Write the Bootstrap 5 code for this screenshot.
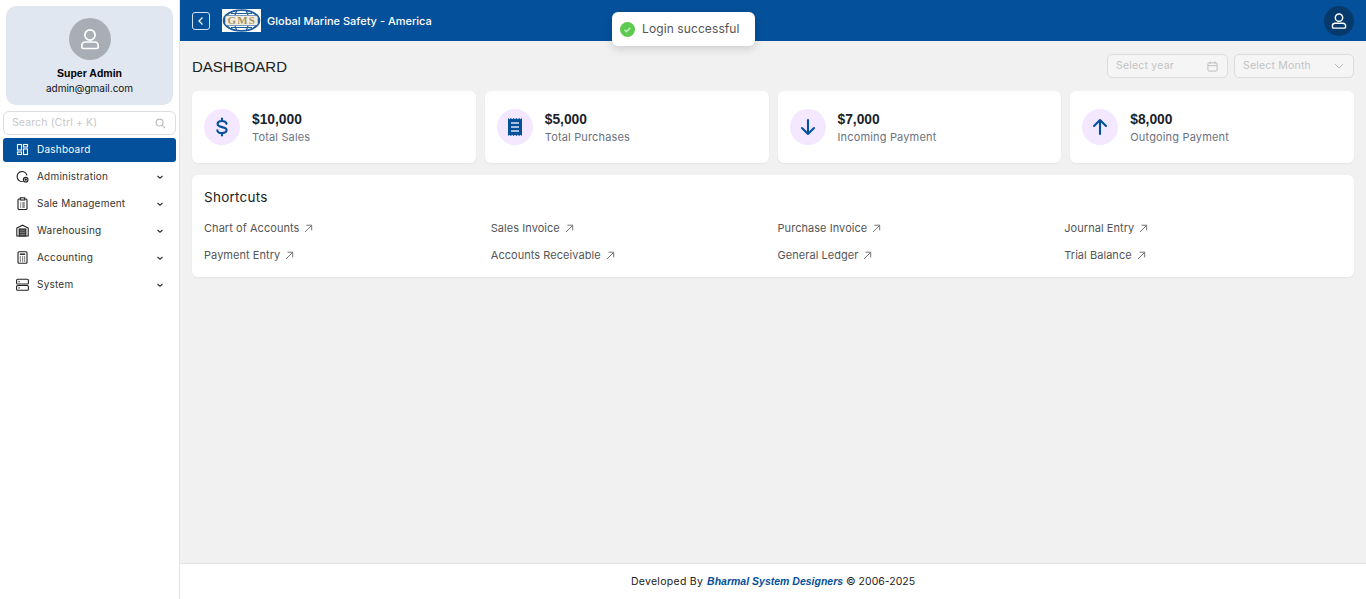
<!DOCTYPE html>
<html lang="en">
<head>
  <meta charset="UTF-8" />
  <meta name="viewport" content="width=device-width, initial-scale=1" />
  <title>Dashboard - Global Marine Safety</title>
  <link href="https://cdn.jsdelivr.net/npm/bootstrap@5.3.0/dist/css/bootstrap.min.css" rel="stylesheet" />
  <style>
    body {
      font-family: Inter, "Noto Sans", sans-serif;
      background: #f1f1f1;
      color: #222;
      height: 599px;
      overflow: hidden;
    }
    .app-shell { height: 599px; position: relative; }
    .side-panel { width: 180px; background: #fff; border-right: 1px solid #e4e4e4; padding: 6px 3px 0; flex-shrink: 0; }
    .profile-box { background: #e1e7f0; border-radius: 10px; margin: 0 3px 6px; height: 99px; padding-top: 12px; text-align: center; }
    .avatar-round { width: 42px; height: 42px; border-radius: 50%; background: #a9aeb6; color: #fff; }
    .profile-name { font-family: "Liberation Sans", sans-serif; font-weight: 700; font-size: 10.5px; color: #000; margin-top: 7px; line-height: 13px; }
    .profile-mail { font-size: 10px; color: #111; line-height: 14px; margin-top: 1px; }
    .side-search { height: 24px; border: 1px solid #ddd; border-radius: 6px; padding: 0 9px 0 8px; font-size: 10.5px; letter-spacing: .12px; color: #c8c8c8; margin-bottom: 3px; }
    .menu-row { height: 24px; margin-bottom: 3px; padding: 0 12px 1px 13px; font-size: 10px; letter-spacing: .22px; color: #333; border-radius: 3px; gap: 8px; text-decoration: none; }
    .menu-row.is-active { background: #05509a; color: #fff; }
    .menu-row svg.mi { flex-shrink: 0; }
    .top-strip { height: 41px; background: #05509a; color: #fff; padding: 0 12px; flex-shrink: 0; }
    .back-btn { width: 18px; height: 18px; border: 1px solid #d5e1ee; border-radius: 3px; margin-right: 12px; }
    .logo-chip { width: 39px; height: 23px; background: #fff; margin-right: 6px; }
    .firm-name { font-size: 11px; font-weight: 500; padding-top: 1px; }
    .user-round { width: 30px; height: 30px; border-radius: 50%; background: #073a6c; }
    .page-body { padding: 13px 12px 0; }
    .page-title { font-family: "Liberation Sans", sans-serif; font-size: 15px; font-weight: 400; color: #222; margin: 0; height: 24px; padding-top: 1px; line-height: 24px; }
    .filter-wrap { gap: 6px; }
    .filter-box { height: 24px; border: 1px solid #dcdcdc; border-radius: 5px; background: #f5f5f5; padding: 0 9px 0 8px; font-size: 10.5px; letter-spacing: .2px; color: #c4c4c4; }
    .filter-year { width: 121px; }
    .filter-month { width: 120px; }
    .stat-grid { display: grid; grid-template-columns: repeat(4, 1fr); gap: 9px; margin-top: 13px; }
    .stat-tile { height: 72px; background: #fff; border-radius: 6px; padding: 0 12px; gap: 12px; box-shadow: 0 1px 2px rgba(0,0,0,.05); }
    .stat-dot { width: 36px; height: 36px; border-radius: 50%; background: #f3e8ff; color: #05509a; flex-shrink: 0; }
    .stat-copy { padding-top: 3px; }
    .stat-num { font-family: "Liberation Sans", sans-serif; font-weight: 700; font-size: 13.8px; color: #1a1f2b; line-height: 18px; }
    .stat-label { font-size: 11px; letter-spacing: .16px; color: #6b7280; line-height: 18px; margin-top: -1px; }
    .short-panel { background: #fff; border-radius: 6px; margin-top: 12px; height: 102px; padding: 12px 3px 0 12px; box-shadow: 0 1px 2px rgba(0,0,0,.05); }
    .short-title { font-size: 13.5px; letter-spacing: .25px; font-weight: 400; color: #222; line-height: 20px; margin: 0 0 12px; }
    .short-grid { display: grid; grid-template-columns: repeat(4, 1fr); row-gap: 9px; }
    .short-link { font-size: 11px; letter-spacing: .05px; color: #555; line-height: 18px; text-decoration: none; gap: 5px; }
    .foot-bar { height: 36px; background: #fff; border-top: 1px solid #e4e4e4; font-size: 10.5px; color: #222; flex-shrink: 0; }
    .foot-lead { letter-spacing: .28px; }
    .foot-bar em { font-family: "Liberation Sans", sans-serif; font-weight: 700; color: #05509a; margin-left: 1px; letter-spacing: 0; }
    .login-toast { position: absolute; left: 612px; top: 12px; width: 143px; height: 34px; background: #fff; border-radius: 6px; padding-left: 8px; gap: 7px; font-size: 12px; letter-spacing: .1px; color: #555; box-shadow: 0 3px 8px rgba(0,0,0,.15); }
  </style>
</head>
<body>

<div class="app-shell d-flex">
  <aside class="side-panel d-flex flex-column">
    <div class="profile-box">
      <div class="avatar-round d-flex align-items-center justify-content-center mx-auto">
        <svg width="24" height="24" viewBox="0 0 24 24" fill="none" stroke="currentColor" stroke-width="1.7" stroke-linejoin="round"><circle cx="12" cy="8" r="5.1"/><path d="M3.800 20v-1.500a3.500 3.500 0 0 1 3.500-3.500h9.400a3.500 3.500 0 0 1 3.500 3.500V20a1.500 1.500 0 0 1-1.500 1.500H5.300A1.500 1.500 0 0 1 3.800 20z"/></svg>
      </div>
      <div class="profile-name">Super Admin</div>
      <div class="profile-mail">admin@gmail.com</div>
    </div>

    <div class="side-search d-flex align-items-center justify-content-between">
      <span>Search (Ctrl + K)</span>
      <svg width="11" height="11" viewBox="0 0 12 12" fill="none" stroke="#bbb" stroke-width="1.2"><circle cx="5" cy="5" r="3.8"/><path d="M8 8l3 3"/></svg>
    </div>

    <a href="#" class="menu-row is-active d-flex align-items-center">
      <svg class="mi" width="13" height="13" viewBox="0 0 13 13" fill="none" stroke="currentColor" stroke-width="1.1"><rect x="1.500" y="1.500" width="4" height="5.500"/><rect x="7.500" y="1.500" width="4" height="2.500"/><rect x="1.500" y="9" width="4" height="2.500"/><rect x="7.500" y="6" width="4" height="5.500"/></svg>
      <span>Dashboard</span>
    </a>
    <a href="#" class="menu-row d-flex align-items-center">
      <svg class="mi" width="13" height="13" viewBox="0 0 13 13" fill="none" stroke="#222" stroke-width="1.1"><path d="M6.800 11.500A5 5 0 1 1 11 5.500"/><circle cx="9.700" cy="9.700" r="2.300"/><circle cx="9.700" cy="9.700" r=".6" fill="#222"/></svg>
      <span class="flex-grow-1">Administration</span>
      <svg width="8" height="8" viewBox="0 0 8 8" fill="none" stroke="#333" stroke-width="1.2"><path d="M1.500 3l2.500 2.300L6.500 3"/></svg>
    </a>
    <a href="#" class="menu-row d-flex align-items-center">
      <svg class="mi" width="13" height="13" viewBox="0 0 13 13" fill="none" stroke="#222" stroke-width="1.1"><rect x="2" y="2" width="9" height="10.500" rx="1"/><rect x="4.300" y=".8" width="4.400" height="2.200" fill="#fff"/><path d="M4.200 6h1M6.300 6h2.500M4.200 8h1M6.300 8h2.500M4.200 10h1M6.300 10h2.500"/></svg>
      <span class="flex-grow-1">Sale Management</span>
      <svg width="8" height="8" viewBox="0 0 8 8" fill="none" stroke="#333" stroke-width="1.2"><path d="M1.500 3l2.500 2.300L6.500 3"/></svg>
    </a>
    <a href="#" class="menu-row d-flex align-items-center">
      <svg class="mi" width="13" height="13" viewBox="0 0 13 13" fill="none" stroke="#222" stroke-width="1.1"><path d="M.8 12V4L6.500 1.200 12.200 4v8z"/><rect x="3.200" y="5" width="6.600" height="7" fill="#777"/><path d="M3.200 7.200h6.600M3.200 9.500h6.600" stroke-width=".7"/></svg>
      <span class="flex-grow-1">Warehousing</span>
      <svg width="8" height="8" viewBox="0 0 8 8" fill="none" stroke="#333" stroke-width="1.2"><path d="M1.500 3l2.500 2.300L6.500 3"/></svg>
    </a>
    <a href="#" class="menu-row d-flex align-items-center">
      <svg class="mi" width="13" height="13" viewBox="0 0 13 13" fill="none" stroke="#222" stroke-width="1.1"><rect x="2" y=".8" width="9" height="11.400" rx="1"/><path d="M3.800 3.200h5.400" stroke-width="1.400"/><path d="M3.800 6h1.200M6 6h1.200M8 6h1.200M3.800 8h1.200M6 8h1.200M8 8h1.200M3.800 10h1.200M6 10h1.200M8 10h1.200"/></svg>
      <span class="flex-grow-1">Accounting</span>
      <svg width="8" height="8" viewBox="0 0 8 8" fill="none" stroke="#333" stroke-width="1.2"><path d="M1.500 3l2.500 2.300L6.500 3"/></svg>
    </a>
    <a href="#" class="menu-row d-flex align-items-center">
      <svg class="mi" width="13" height="13" viewBox="0 0 13 13" fill="none" stroke="#222" stroke-width="1.1"><rect x=".6" y="1.200" width="11.800" height="4.800" rx="1"/><rect x=".6" y="7.500" width="11.800" height="4.800" rx="1"/><path d="M2.500 3.600h1.200M2.500 9.900h1.200"/></svg>
      <span class="flex-grow-1">System</span>
      <svg width="8" height="8" viewBox="0 0 8 8" fill="none" stroke="#333" stroke-width="1.2"><path d="M1.500 3l2.500 2.300L6.500 3"/></svg>
    </a>
  </aside>

  <div class="flex-grow-1 d-flex flex-column">
    <header class="top-strip d-flex align-items-center">
      <div class="back-btn d-flex align-items-center justify-content-center">
        <svg width="10" height="10" viewBox="0 0 10 10" fill="none" stroke="#fff" stroke-width="1.2"><path d="M6.500 1.500L3 5l3.500 3.500"/></svg>
      </div>
      <div class="logo-chip d-flex align-items-center justify-content-center">
        <svg width="39" height="23" viewBox="0 0 39 23">
          <ellipse cx="19.500" cy="11.500" rx="18.800" ry="11.200" fill="#1d5c9c"/>
          <ellipse cx="19.500" cy="11.500" rx="16.500" ry="9.500" fill="#fff"/>
          <path d="M9 4.500h21M9 18.500h21M15 1l-2 5M24 1l2 5M15 22l-2-5M24 22l2-5" stroke="#1d5c9c" stroke-width="1.200" fill="none"/>
          <rect x="3" y="6.500" width="33" height="10" rx="2" fill="#f2eedf" stroke="#1d5c9c" stroke-width=".6"/>
          <text x="19.800" y="15.200" text-anchor="middle" font-family="Liberation Serif, serif" font-size="11" font-weight="700" letter-spacing="1.200" fill="#a8925a">GMS</text>
        </svg>
      </div>
      <span class="firm-name flex-grow-1">Global Marine Safety - America</span>
      <div class="user-round d-flex align-items-center justify-content-center">
        <svg width="18" height="18" viewBox="0 0 24 24" fill="none" stroke="#fff" stroke-width="1.900" stroke-linejoin="round"><circle cx="12" cy="7.500" r="4.900"/><path d="M3.200 19.500v-1a3.500 3.500 0 0 1 3.500-3.500h10.600a3.500 3.500 0 0 1 3.500 3.500v1a2 2 0 0 1-2 2H5.200a2 2 0 0 1-2-2z"/></svg>
      </div>
    </header>

    <main class="page-body flex-grow-1">
      <div class="d-flex align-items-center justify-content-between">
        <h1 class="page-title">DASHBOARD</h1>
        <div class="filter-wrap d-flex">
          <div class="filter-box filter-year d-flex align-items-center justify-content-between">
            <span>Select year</span>
            <svg width="11" height="11" viewBox="0 0 12 12" fill="none" stroke="#bbb" stroke-width="1"><rect x="1" y="2" width="10" height="9" rx="1"/><path d="M1 5h10M3.500 .5v2.500M8.500 .5v2.500"/></svg>
          </div>
          <div class="filter-box filter-month d-flex align-items-center justify-content-between">
            <span>Select Month</span>
            <svg width="10" height="10" viewBox="0 0 10 10" fill="none" stroke="#bbb" stroke-width="1"><path d="M1 3l4 4 4-4"/></svg>
          </div>
        </div>
      </div>

      <div class="stat-grid">
        <div class="stat-tile d-flex align-items-center">
          <div class="stat-dot d-flex align-items-center justify-content-center">
            <svg width="20" height="20" viewBox="0 0 20 20" fill="none" stroke="currentColor" stroke-width="2.100" stroke-linecap="round"><path d="M14.500 6.700C14.200 5 12.400 4 10 4 7.400 4 5.600 5.200 5.600 7.100c0 4.300 9 1.800 9 6 0 1.800-1.900 3-4.600 3-2.600 0-4.400-1-4.700-2.800M10 1.500V4M10 16v2.500"/></svg>
          </div>
          <div class="stat-copy">
            <div class="stat-num">$10,000</div>
            <div class="stat-label">Total Sales</div>
          </div>
        </div>
        <div class="stat-tile d-flex align-items-center">
          <div class="stat-dot d-flex align-items-center justify-content-center">
            <svg width="20" height="20" viewBox="0 0 20 20"><path fill="currentColor" d="M3 1l1.400 1.200L5.800 1l1.400 1.200L8.600 1 10 2.200 11.400 1l1.400 1.200L14.200 1l1.400 1.200L17 1v18l-1.400-1.200L14.200 19l-1.400-1.200L11.400 19 10 17.800 8.600 19l-1.400-1.200L5.800 19l-1.400-1.200L3 19z"/><path d="M6 6h8M6 10h8M6 14h8" stroke="#dfe3f3" stroke-width="1.300"/></svg>
          </div>
          <div class="stat-copy">
            <div class="stat-num">$5,000</div>
            <div class="stat-label">Total Purchases</div>
          </div>
        </div>
        <div class="stat-tile d-flex align-items-center">
          <div class="stat-dot d-flex align-items-center justify-content-center">
            <svg width="20" height="20" viewBox="0 0 20 20" fill="none" stroke="currentColor" stroke-width="2.100" stroke-linecap="round" stroke-linejoin="round"><path d="M10 3v14M4 11l6 6 6-6"/></svg>
          </div>
          <div class="stat-copy">
            <div class="stat-num">$7,000</div>
            <div class="stat-label">Incoming Payment</div>
          </div>
        </div>
        <div class="stat-tile d-flex align-items-center">
          <div class="stat-dot d-flex align-items-center justify-content-center">
            <svg width="20" height="20" viewBox="0 0 20 20" fill="none" stroke="currentColor" stroke-width="2.100" stroke-linecap="round" stroke-linejoin="round"><path d="M10 17V3M4 9l6-6 6 6"/></svg>
          </div>
          <div class="stat-copy">
            <div class="stat-num">$8,000</div>
            <div class="stat-label">Outgoing Payment</div>
          </div>
        </div>
      </div>

      <section class="short-panel">
        <h2 class="short-title">Shortcuts</h2>
        <div class="short-grid">
          <a href="#" class="short-link d-flex align-items-center"><span>Chart of Accounts</span><svg width="9" height="9" viewBox="0 0 9 9" fill="none" stroke="#666" stroke-width=".9"><path d="M1 8l6.500-6.500M2.500 1.200h5.200v5.200"/></svg></a>
          <a href="#" class="short-link d-flex align-items-center"><span>Sales Invoice</span><svg width="9" height="9" viewBox="0 0 9 9" fill="none" stroke="#666" stroke-width=".9"><path d="M1 8l6.500-6.500M2.500 1.200h5.200v5.200"/></svg></a>
          <a href="#" class="short-link d-flex align-items-center"><span>Purchase Invoice</span><svg width="9" height="9" viewBox="0 0 9 9" fill="none" stroke="#666" stroke-width=".9"><path d="M1 8l6.500-6.500M2.500 1.200h5.200v5.200"/></svg></a>
          <a href="#" class="short-link d-flex align-items-center"><span>Journal Entry</span><svg width="9" height="9" viewBox="0 0 9 9" fill="none" stroke="#666" stroke-width=".9"><path d="M1 8l6.500-6.500M2.500 1.200h5.200v5.200"/></svg></a>
          <a href="#" class="short-link d-flex align-items-center"><span>Payment Entry</span><svg width="9" height="9" viewBox="0 0 9 9" fill="none" stroke="#666" stroke-width=".9"><path d="M1 8l6.500-6.500M2.500 1.200h5.200v5.200"/></svg></a>
          <a href="#" class="short-link d-flex align-items-center"><span>Accounts Receivable</span><svg width="9" height="9" viewBox="0 0 9 9" fill="none" stroke="#666" stroke-width=".9"><path d="M1 8l6.500-6.500M2.500 1.200h5.200v5.200"/></svg></a>
          <a href="#" class="short-link d-flex align-items-center"><span>General Ledger</span><svg width="9" height="9" viewBox="0 0 9 9" fill="none" stroke="#666" stroke-width=".9"><path d="M1 8l6.500-6.500M2.500 1.200h5.200v5.200"/></svg></a>
          <a href="#" class="short-link d-flex align-items-center"><span>Trial Balance</span><svg width="9" height="9" viewBox="0 0 9 9" fill="none" stroke="#666" stroke-width=".9"><path d="M1 8l6.500-6.500M2.500 1.200h5.200v5.200"/></svg></a>
        </div>
      </section>
    </main>

    <footer class="foot-bar d-flex align-items-center justify-content-center">
      <span><span class="foot-lead">Developed By</span> <em>Bharmal System Designers</em> © 2006-2025</span>
    </footer>
  </div>

  <div class="login-toast d-flex align-items-center">
    <svg width="15" height="15" viewBox="0 0 15 15"><circle cx="7.500" cy="7.500" r="7.500" fill="#5cc94f"/><path d="M4.500 7.800l2 2 3.800-4" fill="none" stroke="#cdeec8" stroke-width="1.300"/></svg>
    <span>Login successful</span>
  </div>
</div>

<script src="https://cdn.jsdelivr.net/npm/bootstrap@5.3.0/dist/js/bootstrap.bundle.min.js"></script>
</body>
</html>
